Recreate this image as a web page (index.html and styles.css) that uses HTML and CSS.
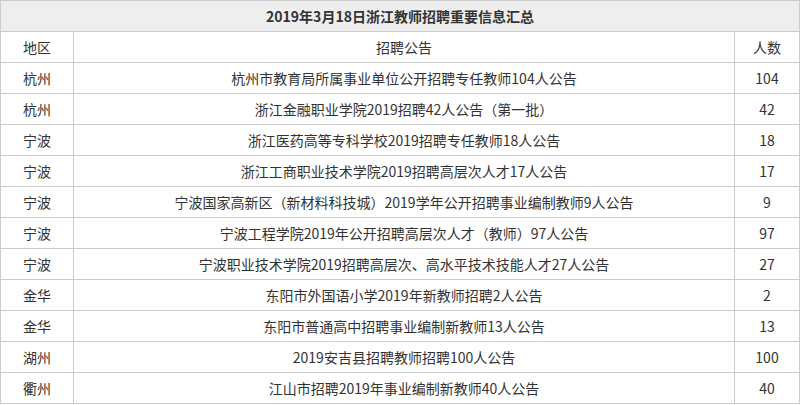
FILE: index.html
```html
<!DOCTYPE html>
<html lang="zh-CN">
<head>
<meta charset="utf-8">
<title>2019年3月18日浙江教师招聘重要信息汇总</title>
<link rel="stylesheet" href="styles.css">
</head>
<body>
<table class="info-table">
  <colgroup>
    <col class="col-area">
    <col class="col-title">
    <col class="col-num">
  </colgroup>
  <thead>
    <tr class="caption-row"><th colspan="3">2019年3月18日浙江教师招聘重要信息汇总</th></tr>
    <tr class="head-row"><td>地区</td><td>招聘公告</td><td>人数</td></tr>
  </thead>
  <tbody>
    <tr><td>杭州</td><td>杭州市教育局所属事业单位公开招聘专任教师104人公告</td><td>104</td></tr>
    <tr><td>杭州</td><td>浙江金融职业学院2019招聘42人公告（第一批）</td><td>42</td></tr>
    <tr><td>宁波</td><td>浙江医药高等专科学校2019招聘专任教师18人公告</td><td>18</td></tr>
    <tr><td>宁波</td><td>浙江工商职业技术学院2019招聘高层次人才17人公告</td><td>17</td></tr>
    <tr><td>宁波</td><td>宁波国家高新区（新材料科技城）2019学年公开招聘事业编制教师9人公告</td><td>9</td></tr>
    <tr><td>宁波</td><td>宁波工程学院2019年公开招聘高层次人才（教师）97人公告</td><td>97</td></tr>
    <tr><td>宁波</td><td>宁波职业技术学院2019招聘高层次、高水平技术技能人才27人公告</td><td>27</td></tr>
    <tr><td>金华</td><td>东阳市外国语小学2019年新教师招聘2人公告</td><td>2</td></tr>
    <tr><td>金华</td><td>东阳市普通高中招聘事业编制新教师13人公告</td><td>13</td></tr>
    <tr><td>湖州</td><td>2019安吉县招聘教师招聘100人公告</td><td>100</td></tr>
    <tr><td>衢州</td><td>江山市招聘2019年事业编制新教师40人公告</td><td>40</td></tr>
  </tbody>
</table>
</body>
</html>
```
FILE: styles.css
```css
html, body {
  margin: 0;
  padding: 0;
  background: #ffffff;
}

body {
  font-family: "Noto Sans CJK SC", "Noto Sans", sans-serif;
  font-size: 14px;
  color: #333333;
}

.info-table {
  border-collapse: collapse;
  table-layout: fixed;
  width: 799px;
}

.col-area { width: 73px; }
.col-title { width: 661px; }
.col-num { width: 65px; }

.info-table th,
.info-table td {
  border: 1px solid #cccccc;
  height: 30px;
  padding: 0;
  text-align: center;
  vertical-align: middle;
  line-height: 20px;
  white-space: nowrap;
}

.caption-row th {
  background: #eeeeee;
  font-weight: bold;
  color: #333333;
}
```
